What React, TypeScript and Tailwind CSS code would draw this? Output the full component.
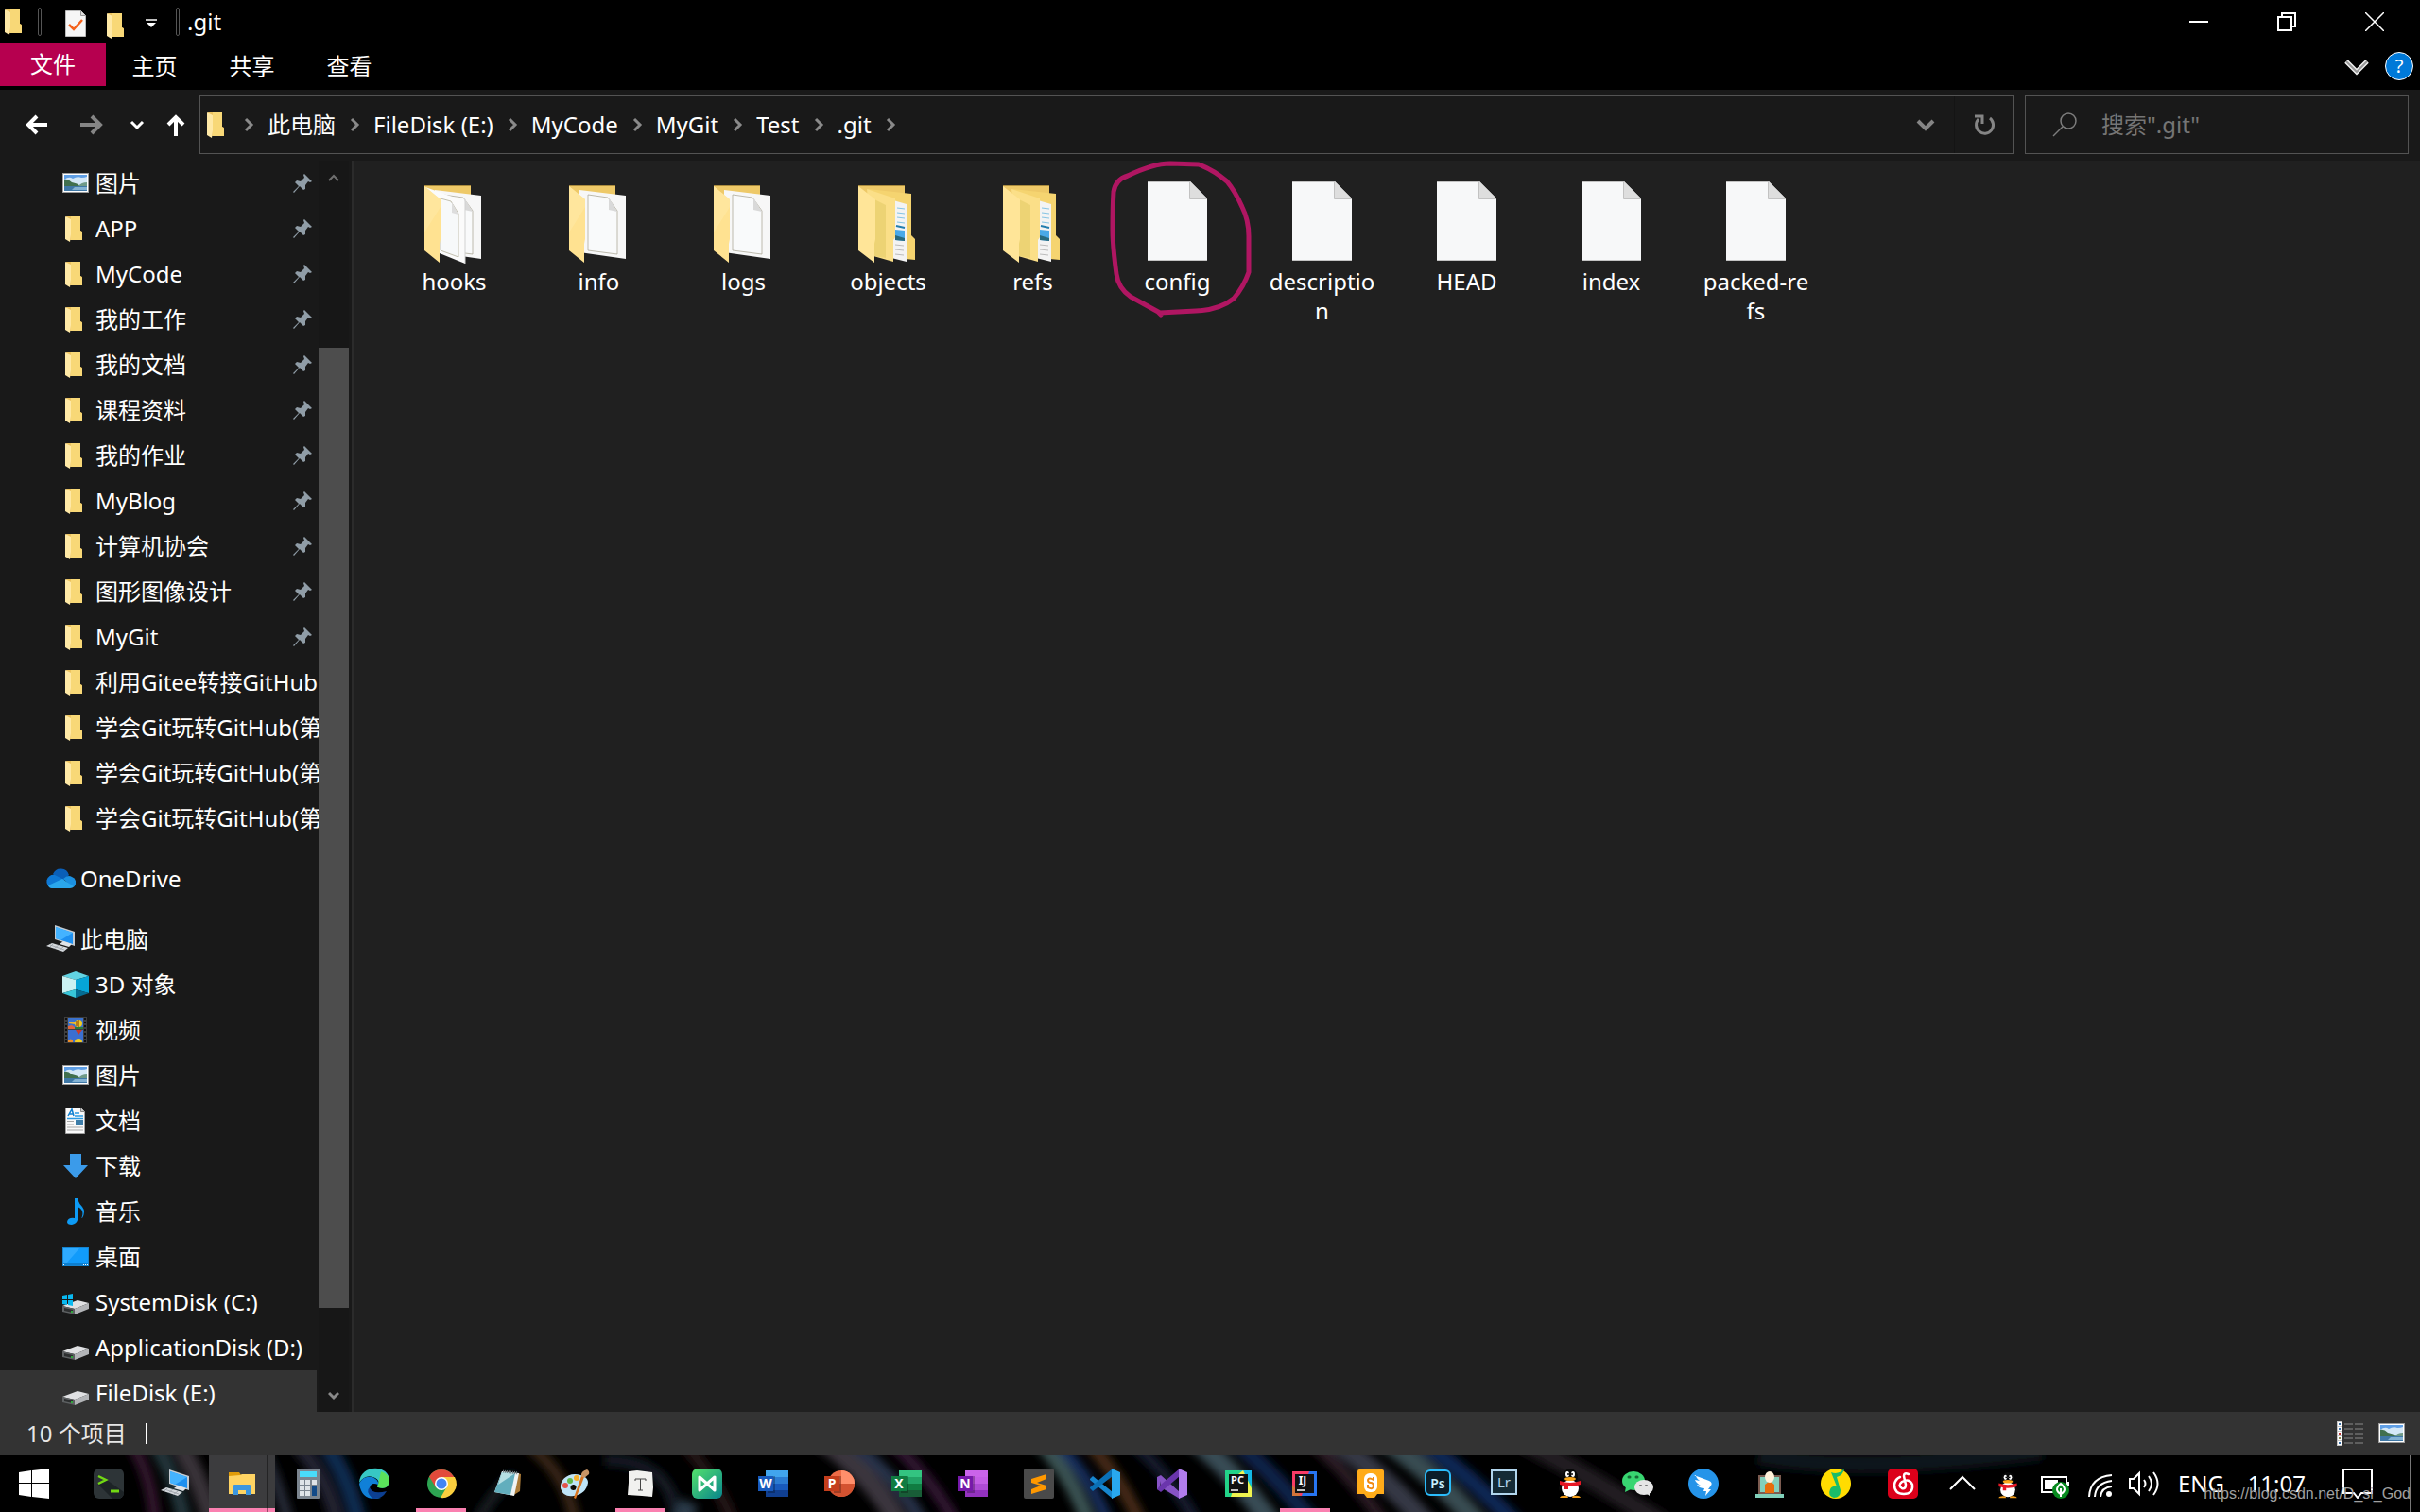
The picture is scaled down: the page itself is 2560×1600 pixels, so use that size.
import React from "react";

type IconProps = { className?: string };

/* ---------- small explorer icons ---------- */

function FolderIcon({ className = "w-7 h-7" }: IconProps) {
  return (
    <svg className={className} viewBox="0 0 28 28">
      <path d="M4 1h15v15l2 1v9H8z" fill="#edc35f" />
      <path d="M9 1h10v15l2 2v8H9z" fill="#f8d877" />
      <path d="M3 1l6 3v16l-1 8-5-3z" fill="#ffe9a6" />
    </svg>
  );
}

function PictureIcon({ className = "w-7 h-7" }: IconProps) {
  return (
    <svg className={className} viewBox="0 0 28 28">
      <rect x="0.5" y="3.5" width="27" height="20" fill="#fff" stroke="#9b9b9b" />
      <rect x="2" y="5" width="24" height="9" fill="#5f9fe6" />
      <path d="M2 10q5-4 9-1q5-3 9-1q4 0 6-1v9H2z" fill="#d4e8f7" />
      <path d="M2 10q4-1 8 3q6 1 9 4l-6 1H2z" fill="#41704f" />
      <path d="M26 13q-6 0-9 4h9z" fill="#6f9a88" />
      <rect x="2" y="17" width="24" height="5" fill="#3f78a6" />
      <path d="M13 18h13v3H10z" fill="#83b2d3" />
    </svg>
  );
}

function CheckDocIcon() {
  return (
    <svg className="w-7 h-7" viewBox="0 0 28 28">
      <path d="M3.500.5h16l5 5v22h-21z" fill="#f6f6f6" stroke="#b9b9b9" />
      <path d="M19.500.5v5h5" fill="#ddd" stroke="#999" />
      <path d="M7 15l5 5 9-10" fill="none" stroke="#f4611a" strokeWidth="2.500" />
    </svg>
  );
}

function OneDriveIcon() {
  return (
    <svg className="w-8 h-8" viewBox="0 0 32 32">
      <path d="M8 11a9 9 0 0 1 17 1l-7 8z" fill="#0a5fb8" />
      <path d="M7 26a7 7 0 1 1 3-14l10 5-12 9z" fill="#0e78d4" />
      <path d="M19 16q5-5 9-2a6 6 0 0 1 1 11z" fill="#1b90e0" />
      <path d="M3 23l15-7 12 8q-1 2-4 2H7q-3 0-4-3z" fill="#2aa7ec" />
    </svg>
  );
}

function ComputerIcon({ className = "w-8 h-8" }: IconProps) {
  return (
    <svg className={className} viewBox="0 0 32 32">
      <path d="M10 1l21 7v15l-21-7z" fill="#c3cbd2" />
      <path d="M11 3l18 6v12l-18-6z" fill="#1e90f0" />
      <path d="M11 3l18 6-13 8-5-2z" fill="#44b3ff" />
      <path d="M19 18l9 3-3 3-10-3z" fill="#dfe3e7" />
      <path d="M7 20l17 5-5 4L1 23z" fill="#d4d8dc" />
      <path d="M5 22l15 5M9 20l-4 4M14 22l-5 4M19 24l-5 4" stroke="#8f979e" strokeWidth="0.700" />
    </svg>
  );
}

function CubeIcon() {
  return (
    <svg className="w-7 h-7" viewBox="0 0 28 28">
      <path d="M14 0l14 5-14 4L0 5z" fill="#62d3e2" />
      <path d="M0 5l14 4v10L0 23z" fill="#caf1f2" />
      <path d="M28 5L14 9v10l14 4z" fill="#06a5d8" />
      <path d="M0 23l14-4v9z" fill="#38c6d9" />
      <path d="M28 23l-14-4v9z" fill="#056c92" />
    </svg>
  );
}

function VideoIcon() {
  return (
    <svg className="w-7 h-7" viewBox="0 0 28 28">
      <rect x="2" width="24" height="28" fill="#3f3f3f" />
      <rect x="6" y="1" width="16" height="12" fill="#3b72cd" />
      <rect x="6" y="14" width="16" height="13" fill="#3b6fd0" />
      <path d="M6 10l4-1 3 2v2H6z" fill="#e0673d" />
      <path d="M13 11h9v2h-9z" fill="#2b7a3b" />
      <circle cx="17" cy="7" r="4" fill="#f1cc22" />
      <path d="M17 3v8M15 4v6" stroke="#7a2f10" />
      <path d="M7 5l3 1 3-1v3l-6-1z" fill="#f0b52b" />
      <path d="M14 14h7l-4 5z" fill="#c93a28" />
      <path d="M13 27a4 4 0 0 1 8 0z" fill="#f1cc22" />
      <path d="M6 25q3-3 5 0v2H6z" fill="#ef8d2a" />
      <path d="M4 1v26M24 1v26" stroke="#101010" strokeWidth="2" strokeDasharray="2 2" />
    </svg>
  );
}

function DocumentIcon() {
  return (
    <svg className="w-7 h-7" viewBox="0 0 28 28">
      <path d="M3.500.5h16l4 4v23h-20z" fill="#fafafa" stroke="#a0a0a0" />
      <path d="M19.500.5v4h4" fill="#ccc" stroke="#888" />
      <path d="M6 9l4-7 2 7M7 7h4" fill="none" stroke="#1181d1" strokeWidth="1.500" />
      <path d="M13 6h5M13 9h9M5 11.500h17" stroke="#2b9ae2" strokeWidth="1.300" />
      <rect x="14" y="13" width="8" height="6" fill="#3c7ca8" />
      <path d="M5 14.500h7M5 18h7M5 21h17M5 24h17" stroke="#a5a5a5" strokeWidth="1.200" />
    </svg>
  );
}

function DownloadIcon() {
  return (
    <svg className="w-7 h-7" viewBox="0 0 28 28">
      <path d="M8 1h12v12h7L14 27 1 13h7z" fill="#3b9bea" />
    </svg>
  );
}

function MusicIcon() {
  return (
    <svg className="w-7 h-7" viewBox="0 0 28 28">
      <path d="M13 0h3q1 5 5 9 4 5 0 12-1 0 0-2 2-7-5-10v14q-1 4-6 5-5 0-5-3 1-5 8-4z" fill="#0d9bf5" />
    </svg>
  );
}

function DesktopIcon() {
  return (
    <svg className="w-7 h-7" viewBox="0 0 28 28">
      <rect x="0.500" y="4.500" width="27" height="19" fill="#119bfb" stroke="#1583cf" />
      <path d="M1 5h17L4 21H1z" fill="#2eaaff" />
      <path d="M1 22h26" stroke="#0a62a4" />
      <path d="M1 22.500h1M22 22.500h1M24 22.500h1M26 22.500h1" stroke="#fff" />
    </svg>
  );
}

function DiskIcon({ windows = false }: { windows?: boolean }) {
  return (
    <svg className="w-7 h-7" viewBox="0 0 28 28">
      <path d="M0 18l16-6 12 3-15 6z" fill="#e0e1e3" />
      <path d="M0 18l13 3v6L0 24z" fill="#5d6062" />
      <path d="M13 21l15-6v6l-15 6z" fill="#b2b4b7" />
      <path d="M2 20l9 2v3l-9-2z" fill="#2c2e2f" />
      <circle cx="10" cy="24" r="1" fill="#31cf3f" />
      {windows && <path d="M0 7l5-1v5H0zM6 6l5-1v6H6zM0 12h5v5l-5-1zM6 12h5v6l-5-1z" fill="#09b9f1" />}
    </svg>
  );
}

function PinIcon() {
  return (
    <svg className="w-5 h-5" viewBox="0 0 20 20">
      <path d="M12 0l8 8-2 1-2-1-3 4v4l-2 1-4-4-6 7-1-1 6-6-4-4 2-2 4 1 4-4-1-3z" fill="#909da7" />
    </svg>
  );
}

function Chevron({ className = "w-3 h-4" }: IconProps) {
  return (
    <svg className={className} viewBox="0 0 12 16" fill="none">
      <path d="M3 2l6 6-6 6" stroke="#8a8a8a" strokeWidth="3" />
    </svg>
  );
}

/* ---------- large file icons ---------- */

function EmptyFile() {
  return (
    <svg className="w-24 h-24" viewBox="1 0 96 96">
      <path d="M17 6h45l18 18v66H17z" fill="#f7f8f9" />
      <path d="M62 6l18 18H62z" fill="#dedede" />
      <path d="M61.500 6v18.500H80M17 89.500h63M17 6.500h45" stroke="#c2c2c2" fill="none" />
    </svg>
  );
}

function PaperFolder({ pages = 1 }: { pages?: number }) {
  return (
    <svg className="w-24 h-24" viewBox="1 0 96 96">
      <path d="M17 10h49v60H17z" fill="#eec968" />
      <path d="M17 10.500h49" stroke="#a98a3d" />
      <path d="M28 15l49 6v67l-49-7z" fill="#f7f7f7" />
      <path d="M37 20l21 3 10 14v46l-31-4z" fill="#f9fafb" stroke="#a39f8c" strokeWidth="0.700" />
      <path d="M59 23v13l9 2z" fill="#d9d9d9" />
      {pages > 1 && (
        <>
          <path d="M18 12l42 15v66l-32-13z" fill="#fbfbfb" />
          <path d="M60 27v66" stroke="#d1d1d1" />
          <path d="M34 24l11 3 8 13v46l-19-7z" fill="#f7f9fa" stroke="#aaa68f" strokeWidth="0.700" />
          <path d="M46 28v11l7 2z" fill="#ddd" />
        </>
      )}
      <path d="M17 11l17 14v42l-1 5v20L17 79z" fill="#ffe291" />
      <path d="M17 11l17 14v8L17 60z" fill="#ffe8a3" opacity="0.700" />
    </svg>
  );
}

function NestedFolder() {
  return (
    <svg className="w-24 h-24" viewBox="1 0 96 96">
      <path d="M17 10h49v60H17z" fill="#eec968" />
      <path d="M17 10.500h49" stroke="#a98a3d" />
      <path d="M27 14l46 5v44l4 4v22l-42-4z" fill="#f5d470" />
      <path d="M54 26l14 4v61l-16-4z" fill="#f3f3f3" />
      <path d="M58 34l8 1M58 39l8 1M58 44l8 1M58 49l8 1" stroke="#83c3e4" />
      <path d="M57 53l9 2" stroke="#237dae" strokeWidth="2" />
      <path d="M56 57l10 1v11l-10-1z" fill="#49a9e8" />
      <path d="M56 63l10 3v3l-10-1z" fill="#286a7e" />
      <path d="M56 73l9 1M56 78l9 1M56 83l9 1" stroke="#bbb" />
      <path d="M26 14l30 10v41l-2 3v23l-21-6z" fill="#fbdf88" />
      <path d="M34 25l12 6v56l-12-2z" fill="#ead06f" opacity="0.800" />
      <path d="M17 11l18 14v42l-1 5v20L17 79z" fill="#ffe598" />
    </svg>
  );
}

/* ---------- taskbar icons ---------- */

function Icon32({ children }: { children: React.ReactNode }) {
  return (
    <svg className="w-8 h-8 overflow-visible" viewBox="0 0 32 32">
      {children}
    </svg>
  );
}

function Office({ letter, dark, tones, round = false }: { letter: string; dark: string; tones: string[]; round?: boolean }) {
  return (
    <Icon32>
      {round ? (
        <>
          <circle cx="18" cy="16" r="14" fill={tones[0]} />
          <path d="M18 2a14 14 0 0 1 14 14H18z" fill={tones[1]} />
          <path d="M4 16h28a14 14 0 0 1-28 0z" fill={tones[2]} />
        </>
      ) : (
        tones.map((tone, i) => <rect key={tone} x="8" y={2 + i * 7} width="24" height="7" fill={tone} />)
      )}
      <path d="M10 8h8v18h-8z" fill="#000" opacity="0.250" />
      <rect y="8" width="16" height="16" fill={dark} />
      <text x="8" y="21" textAnchor="middle" fontSize="14" fontWeight="700" fill="#fff">
        {letter}
      </text>
    </Icon32>
  );
}

function Penguin() {
  return (
    <Icon32>
      <ellipse cx="16" cy="9" rx="8" ry="9" fill="#090909" />
      <path d="M8 14q-6 7-3 10l4-3z" fill="#090909" />
      <path d="M24 14q6 7 3 10l-4-3z" fill="#090909" />
      <ellipse cx="16" cy="21" rx="9" ry="9" fill="#fff" />
      <ellipse cx="13" cy="6" rx="2" ry="3" fill="#fff" />
      <ellipse cx="19" cy="6" rx="2" ry="3" fill="#fff" />
      <circle cx="14" cy="6" r="1" />
      <circle cx="18" cy="6" r="1" />
      <ellipse cx="16" cy="11" rx="6" ry="2" fill="#faa61a" />
      <path d="M5 13q11 4 22 0v4q-11 4-22 0z" fill="#e71824" />
      <path d="M10 16h4v6h-4z" fill="#e71824" />
      <path d="M5 31q1-3 8-2l1 2zM27 31q-1-3-8-2l-1 2z" fill="#f6a01c" />
    </Icon32>
  );
}

const apps: { name: string; active?: boolean; icon: React.ReactNode }[] = [
  {
    name: "Terminal",
    icon: (
      <Icon32>
        <rect width="32" height="32" rx="6" fill="#2d3437" />
        <path d="M14 12L5 17l15 15h8l4-4v-3z" fill="#1d2326" />
        <path d="M5 8l8 4-8 4" fill="none" stroke="#72d813" strokeWidth="2.500" />
        <path d="M18 24h9" stroke="#72d813" strokeWidth="3" />
      </Icon32>
    ),
  },
  { name: "Computer", icon: <ComputerIcon /> },
  {
    name: "File Explorer",
    icon: (
      <Icon32>
        <path d="M2 4h11l2 3-2 3H2z" fill="#e19c09" />
        <path d="M2 8l12-1 2-1h14v21H2z" fill="#ffd463" />
        <path d="M7 18q0-1 1-1h16q1 0 1 1v10h-5v-5h-8v5H7z" fill="#3c96df" />
      </Icon32>
    ),
  },
  {
    name: "Calculator",
    icon: (
      <Icon32>
        <rect x="4" width="24" height="32" rx="1" fill="#7b858f" />
        <rect x="7" y="3" width="18" height="6" fill="#49dcfa" />
        <path d="M7 12h5v5H7zM13 12h5v5h-5zM20 12h5v5h-5zM7 18h5v5H7zM13 18h5v5h-5zM7 24h5v5H7zM13 24h5v5h-5z" fill="#dfe4e8" />
        <rect x="20" y="18" width="5" height="11" fill="#124a88" />
      </Icon32>
    ),
  },
  {
    name: "Edge",
    icon: (
      <Icon32>
        <path d="M0 15C1-5 32-5 32 13q-1 10-12 7-2-1 0-3 2-4-3-7Q7 5 0 15z" fill="#37c8c4" />
        <path d="M23 3q9 3 9 10-1 10-12 7-2-1 0-3z" fill="#5be35b" />
        <path d="M0 16Q4 7 14 9q7 3 6 8-8-3-9 4 2 9 12 10Q3 36 0 16z" fill="#1080d8" />
        <path d="M11 20q3 8 18 4-5 9-15 8-8-8-3-12z" fill="#0c3f91" />
      </Icon32>
    ),
  },
  {
    name: "Chrome",
    active: true,
    icon: (
      <Icon32>
        <circle cx="16" cy="16" r="15" fill="#2da452" />
        <path d="M3 8.500A15 15 0 0 1 29 8.500L30 10H16l-6 10z" fill="#e24a3b" />
        <path d="M16 9h14a15 15 0 0 1-15 22l7-12z" fill="#fbcf3e" />
        <circle cx="16" cy="16" r="7" fill="#fff" />
        <circle cx="16" cy="16" r="5.500" fill="#4285f4" />
      </Icon32>
    ),
  },
  {
    name: "Notepad",
    icon: (
      <Icon32>
        <path d="M27 5l3 1-1 18-8 5z" fill="#aa7a37" />
        <path d="M10 3l18 2-5 24-21-4z" fill="#f0f4f4" />
        <path d="M10 4l14 1-5 23-17-3z" fill="#62aebd" />
        <path d="M10 4l14 1-18 12z" fill="#b6dfe3" />
        <path d="M11 3l16 2" stroke="#69767a" strokeWidth="3" strokeDasharray="1 1" />
      </Icon32>
    ),
  },
  {
    name: "Paint",
    icon: (
      <Icon32>
        <path d="M17 6C8 6 1 13 2 21q3 10 14 8 13-2 15-14 0-8-14-9zm-1 11a3 3 0 1 1-1 6 3 3 0 0 1 1-6z" fill="#bfe4f7" fillRule="evenodd" />
        <circle cx="7" cy="18" r="3" fill="#e45248" />
        <circle cx="12" cy="13" r="3" fill="#62b74b" />
        <circle cx="19" cy="10" r="3" fill="#f6b12d" />
        <path d="M24 8l3 1-9 23-2-1z" fill="#d97622" />
        <path d="M24 8q-1-5 6-7 3 2 2 5l-5 4z" fill="#c99566" />
      </Icon32>
    ),
  },
  {
    name: "Typora",
    active: true,
    icon: (
      <Icon32>
        <path d="M4 3l9-1 16 2 1 16-1 10-11-1L3 28l1-13z" fill="#f1f1ef" />
        <path d="M11 13v-2h11v2M16.500 11v12M14 23h5" fill="none" stroke="#444" />
      </Icon32>
    ),
  },
  {
    name: "MindMaster",
    icon: (
      <Icon32>
        <defs>
          <linearGradient id="mind" x1="0" y1="0" x2="1" y2="1">
            <stop stopColor="#55e36c" />
            <stop offset="1" stopColor="#07848c" />
          </linearGradient>
        </defs>
        <rect width="32" height="32" rx="6" fill="url(#mind)" />
        <path d="M8 9v14l16-14v14z" fill="none" stroke="#fff" strokeWidth="3" strokeLinejoin="round" />
      </Icon32>
    ),
  },
  { name: "Word", icon: <Office letter="W" dark="#185abd" tones={["#41a5ee", "#2b7cd3", "#185abd", "#103f91"]} /> },
  { name: "PowerPoint", icon: <Office letter="P" dark="#c43e1c" tones={["#ed6c47", "#ff8f6b", "#d35230"]} round /> },
  { name: "Excel", icon: <Office letter="X" dark="#107c41" tones={["#33c481", "#21a366", "#107c41", "#185c37"]} /> },
  { name: "OneNote", icon: <Office letter="N" dark="#7719aa" tones={["#ca64ea", "#c45ee6", "#ae4bd5", "#9332bf"]} /> },
  {
    name: "Sublime Text",
    icon: (
      <Icon32>
        <rect width="32" height="32" rx="2" fill="#4a4a4a" />
        <path d="M8 11l16-5v5l-10 4 10 3v4L8 27v-5l10-4-10-3z" fill="#ff9800" />
      </Icon32>
    ),
  },
  {
    name: "VS Code",
    icon: (
      <Icon32>
        <path d="M0 11l3-3 21 17v7L0 12z" fill="#1686cf" />
        <path d="M0 21l3 3L24 8V0L0 20z" fill="#0a70b6" />
        <path d="M23 0l9 4v24l-9 4z" fill="#29a8ef" />
      </Icon32>
    ),
  },
  {
    name: "Visual Studio",
    icon: (
      <Icon32>
        <path d="M0 9l4-2 20 18v7L4 20v-7L3 21v2l-3-1z" fill="#8753c5" />
        <path d="M0 22l4 3L24 8V0L4 17z" fill="#6a35ac" />
        <path d="M23 0l9 4v24l-9 4z" fill="#b17ced" />
      </Icon32>
    ),
  },
  {
    name: "PyCharm",
    icon: (
      <Icon32>
        <path d="M2 2h28v28H2z" fill="#22d389" />
        <path d="M18 2h12v16z" fill="#13b9e5" />
        <path d="M16 6l5-4 9 19v9H8z" fill="#eff34f" />
        <path d="M6 6h20v20H6z" fill="#111" />
        <text x="15" y="16" textAnchor="middle" fontSize="11" fontWeight="700" fill="#fff">
          PC
        </text>
        <path d="M8 23h8" stroke="#fff" strokeWidth="1.500" />
      </Icon32>
    ),
  },
  {
    name: "IntelliJ IDEA",
    active: true,
    icon: (
      <Icon32>
        <path d="M3 3h26v26H3z" fill="#f83b66" />
        <path d="M29 3v26H13L21 3z" fill="#2775f2" />
        <path d="M3 17l9 12H3z" fill="#d2743a" />
        <path d="M6 6h20v20H6z" fill="#111" />
        <text x="14" y="17" textAnchor="middle" fontSize="12" fontWeight="700" fill="#fff">
          IJ
        </text>
        <path d="M8 23h8" stroke="#fff" strokeWidth="1.500" />
      </Icon32>
    ),
  },
  {
    name: "Scratch",
    icon: (
      <Icon32>
        <path d="M4 1h24q2 0 2 2v24h-7l-3 4h-8l-3-4H2V3q0-2 2-2z" fill="#ffab19" />
        <rect x="9" y="5" width="14" height="20" rx="6" fill="#fff" />
        <path d="M19 9v3q-5-3-6 0 0 3 3 3t3 4q-1 4-6 1v-3" fill="none" stroke="#f18b12" strokeWidth="2" />
      </Icon32>
    ),
  },
  {
    name: "Photoshop",
    icon: (
      <Icon32>
        <rect x="3" y="2" width="26" height="26" rx="5" fill="#0b1d29" stroke="#2bbcfb" strokeWidth="2" />
        <text x="16" y="21" textAnchor="middle" fontSize="14" fontWeight="600" fill="#c9f0ff">
          Ps
        </text>
      </Icon32>
    ),
  },
  {
    name: "Lightroom",
    icon: (
      <Icon32>
        <rect x="3" y="2" width="26" height="25" fill="#152b36" stroke="#b1d5ed" strokeWidth="2" />
        <text x="16" y="20" textAnchor="middle" fontSize="15" fill="#b1d5ed">
          Lr
        </text>
      </Icon32>
    ),
  },
  { name: "QQ", icon: <Penguin /> },
  {
    name: "WeChat",
    icon: (
      <Icon32>
        <ellipse cx="12" cy="13" rx="12" ry="10" fill="#38d671" />
        <path d="M4 19l-1 6 6-3z" fill="#38d671" />
        <ellipse cx="23" cy="20" rx="10" ry="8" fill="#e6e6e6" />
        <path d="M25 26l4 3v-6z" fill="#e6e6e6" />
        <path d="M7 9h1M15 9h1" stroke="#166b36" strokeWidth="3" strokeLinecap="round" />
        <path d="M19 18h1M25 18h1" stroke="#777" strokeWidth="2" strokeLinecap="round" />
      </Icon32>
    ),
  },
  {
    name: "DingTalk",
    icon: (
      <Icon32>
        <circle cx="16" cy="16" r="16" fill="#2594e9" />
        <path d="M6 7l16 6q4 2 2 5l-3 4h3l-6 7 1-5h-3l1-3q-6 0-8-4l4 1q-5-3-6-6l5 1q-4-3-4-6z" fill="#fff" />
      </Icon32>
    ),
  },
  {
    name: "Remote",
    icon: (
      <Icon32>
        <path d="M4 7h24v20H4z" fill="#7b5b50" />
        <path d="M6 9h20v16H6z" fill="#83d0bc" />
        <path d="M11 26v-9l5-4 5 4v9z" fill="#e76d0c" />
        <ellipse cx="16" cy="9" rx="5" ry="6" fill="#fff1da" />
        <path d="M1 27h30v4H1z" fill="#80d0ba" />
      </Icon32>
    ),
  },
  {
    name: "QQ Music",
    icon: (
      <Icon32>
        <circle cx="16" cy="16" r="16" fill="#ffdc00" />
        <path d="M11 4q8 3 14-4-1 7-8 9l4 14q0 8-7 8-7-2-4-9 2-4 7-3z" fill="#19bc69" />
      </Icon32>
    ),
  },
  {
    name: "NetEase Music",
    icon: (
      <Icon32>
        <rect width="32" height="32" rx="5" fill="#dc001a" />
        <path d="M22 6q-5-2-5 2l2 9q0 5-4 4-5-3 0-7 8-4 11 3 1 10-9 10-10 0-10-10 1-6 6-8" fill="none" stroke="#fff" strokeWidth="2.500" strokeLinecap="round" />
      </Icon32>
    ),
  },
];

/* ---------- data ---------- */

const quickAccess = [
  "APP",
  "MyCode",
  "我的工作",
  "我的文档",
  "课程资料",
  "我的作业",
  "MyBlog",
  "计算机协会",
  "图形图像设计",
  "MyGit",
];

const recent = ["利用Gitee转接GitHub", "学会Git玩转GitHub(第一", "学会Git玩转GitHub(第二", "学会Git玩转GitHub(第三"];

const devices = [
  { name: "3D 对象", icon: <CubeIcon /> },
  { name: "视频", icon: <VideoIcon /> },
  { name: "图片", icon: <PictureIcon /> },
  { name: "文档", icon: <DocumentIcon /> },
  { name: "下载", icon: <DownloadIcon /> },
  { name: "音乐", icon: <MusicIcon /> },
  { name: "桌面", icon: <DesktopIcon /> },
  { name: "SystemDisk (C:)", icon: <DiskIcon windows /> },
  { name: "ApplicationDisk (D:)", icon: <DiskIcon /> },
  { name: "FileDisk (E:)", icon: <DiskIcon />, selected: true },
];

const crumbs = ["此电脑", "FileDisk (E:)", "MyCode", "MyGit", "Test", ".git"];

const files = [
  { name: "hooks", icon: <PaperFolder pages={2} /> },
  { name: "info", icon: <PaperFolder /> },
  { name: "logs", icon: <PaperFolder /> },
  { name: "objects", icon: <NestedFolder /> },
  { name: "refs", icon: <NestedFolder /> },
  { name: "config", icon: <EmptyFile />, circled: true },
  { name: "description", icon: <EmptyFile /> },
  { name: "HEAD", icon: <EmptyFile /> },
  { name: "index", icon: <EmptyFile /> },
  { name: "packed-refs", icon: <EmptyFile /> },
];

/* ---------- window parts ---------- */

function TitleBar() {
  return (
    <header className="flex h-[45px] shrink-0 items-center bg-black">
      <div className="flex items-center pl-[2px]">
        <FolderIcon />
        <span className="ml-[10px] h-[30px] w-1 rounded-sm border border-[#555]" />
        <button aria-label="属性" className="ml-[22px] mt-1">
          <CheckDocIcon />
        </button>
        <button aria-label="新建文件夹" className="ml-4 mt-2">
          <FolderIcon />
        </button>
        <button aria-label="自定义快速访问工具栏" className="ml-4 mt-1">
          <svg className="h-3 w-3" viewBox="0 0 12 12">
            <path d="M0 2h12" stroke="#fff" strokeWidth="1.500" />
            <path d="M1 5h10l-5 5z" fill="#fff" />
          </svg>
        </button>
        <span className="ml-5 h-[30px] w-1 rounded-sm border border-[#555]" />
      </div>
      <h1 className="ml-2 flex-1 text-2xl">.git</h1>
      <button aria-label="最小化" className="flex w-[93px] justify-center">
        <svg className="h-5 w-5" viewBox="0 0 20 20">
          <path d="M0 10h20" stroke="#fff" strokeWidth="2" />
        </svg>
      </button>
      <button aria-label="还原" className="flex w-[93px] justify-center">
        <svg className="h-5 w-5" viewBox="0 0 20 20" fill="none" stroke="#fff" strokeWidth="2">
          <path d="M1 5h14v14H1zM5 5V1h14v14h-4" />
        </svg>
      </button>
      <button aria-label="关闭" className="mr-[2px] flex w-[93px] justify-center">
        <svg className="h-5 w-5" viewBox="0 0 20 20">
          <path d="M0 0l20 20M20 0L0 20" stroke="#fff" strokeWidth="1.500" />
        </svg>
      </button>
    </header>
  );
}

function Ribbon() {
  return (
    <div className="flex h-[50px] shrink-0 bg-black text-2xl">
      <button className="h-[46px] w-28 bg-[#b6004f]">文件</button>
      <button className="w-[103px]">主页</button>
      <button className="w-[103px]">共享</button>
      <button className="w-[103px]">查看</button>
      <div className="ml-auto flex items-center gap-4 pr-[7px]">
        <button aria-label="展开功能区">
          <svg className="h-7 w-7" viewBox="0 0 28 28" fill="none">
            <path d="M3 9l11 11L25 9" stroke="#f0f0f0" strokeWidth="5" />
            <path d="M3 9l11 11L25 9" stroke="#999" strokeWidth="2" />
          </svg>
        </button>
        <button aria-label="帮助" className="h-[30px] w-[30px] rounded-full border border-white bg-[#0079d8] text-xl leading-7">
          ?
        </button>
      </div>
    </div>
  );
}

function AddressRow() {
  return (
    <div className="flex h-[75px] shrink-0 bg-[#191919] pr-3 pt-[6px] text-2xl">
      <nav className="flex h-[62px] w-[211px] shrink-0 items-center pl-[27px]">
        <button aria-label="后退">
          <svg className="h-6 w-6" viewBox="0 0 24 24" fill="none" stroke="#fff" strokeWidth="4">
            <path d="M23 12H3M12 3l-9 9 9 9" />
          </svg>
        </button>
        <button aria-label="前进" className="ml-[34px]">
          <svg className="h-6 w-6" viewBox="0 0 24 24" fill="none" stroke="#858585" strokeWidth="4">
            <path d="M0 12h20M12 3l9 9-9 9" />
          </svg>
        </button>
        <button aria-label="最近" className="ml-7">
          <svg className="h-4 w-4" viewBox="0 0 16 16" fill="none" stroke="#fff" strokeWidth="3">
            <path d="M2 5l6 6 6-6" />
          </svg>
        </button>
        <button aria-label="上移" className="ml-[21px]">
          <svg className="h-6 w-6" viewBox="0 0 24 24" fill="none" stroke="#fff" strokeWidth="4">
            <path d="M12 24V4M4 12l8-8 8 8" />
          </svg>
        </button>
      </nav>
      <div className="flex h-[62px] flex-1 items-center border border-[#535353] pl-1">
        <FolderIcon />
        <ol className="flex items-center">
          <li className="ml-[13px] flex">
            <Chevron />
          </li>
          {crumbs.map((crumb) => (
            <li key={crumb} className="ml-[14px] flex items-center gap-[14px]">
              <a href="#">{crumb}</a>
              <Chevron />
            </li>
          ))}
        </ol>
        <button aria-label="历史" className="ml-auto mr-5">
          <svg className="h-5 w-5" viewBox="0 0 20 20" fill="none" stroke="#858585" strokeWidth="4">
            <path d="M2 6l8 8 8-8" />
          </svg>
        </button>
        <button aria-label="刷新" className="flex h-full w-[62px] items-center justify-center border-l border-[#141414]">
          <svg className="h-6 w-6" viewBox="0 0 24 24" fill="none" stroke="#858585" strokeWidth="3">
            <path d="M18 5a9 9 0 1 1-12 1M2 3h8v8" />
          </svg>
        </button>
      </div>
      <label className="ml-3 flex h-[62px] w-[406px] items-center border border-[#535353] pl-7">
        <svg className="h-7 w-7" viewBox="0 0 28 28" fill="none" stroke="#7d7d7d" strokeWidth="1.500">
          <circle cx="17" cy="10" r="8" />
          <path d="M11 16L1 26" />
        </svg>
        <input
          type="text"
          aria-label="搜索"
          placeholder='搜索".git"'
          className="ml-6 w-[300px] bg-transparent outline-none placeholder:text-[#757575]"
        />
      </label>
    </div>
  );
}

function SideRow({ name, icon, pinned, selected }: { name: string; icon: React.ReactNode; pinned?: boolean; selected?: boolean }) {
  return (
    <li className={selected ? "mr-[2px] bg-[#333]" : ""}>
      <a href="#" className="flex h-12 items-center pl-[66px]">
        <span className="w-7 shrink-0">{icon}</span>
        <span className="ml-[7px] flex-1 overflow-hidden whitespace-nowrap">{name}</span>
        {pinned && (
          <span className="mr-[7px] shrink-0">
            <PinIcon />
          </span>
        )}
      </a>
    </li>
  );
}

function Sidebar() {
  return (
    <aside className="flex w-[375px] shrink-0 border-r-[3px] border-[#2b2b2b] bg-[#191919]">
      <nav className="w-[337px] overflow-hidden">
        <ul>
          <SideRow name="图片" icon={<PictureIcon />} pinned />
          {quickAccess.map((name) => (
            <SideRow key={name} name={name} icon={<FolderIcon />} pinned />
          ))}
          {recent.map((name) => (
            <SideRow key={name} name={name} icon={<FolderIcon />} />
          ))}
        </ul>
        <a href="#" className="my-4 flex h-12 items-center gap-[5px] pl-12">
          <OneDriveIcon />
          OneDrive
        </a>
        <a href="#" className="flex h-12 items-center gap-[5px] pl-12">
          <ComputerIcon />
          此电脑
        </a>
        <ul>
          {devices.map((device) => (
            <SideRow key={device.name} {...device} />
          ))}
        </ul>
      </nav>
      <div className="flex w-8 flex-col items-center bg-[#171717] py-2">
        <svg className="h-5 w-3" viewBox="0 0 12 20" fill="none" stroke="#6f6f6f" strokeWidth="2">
          <path d="M1 13l5-5 5 5" />
        </svg>
        <div className="mb-[82px] mt-[170px] w-full flex-1 bg-[#4d4d4d]" />
        <svg className="h-5 w-3" viewBox="0 0 12 20" fill="none" stroke="#8a8a8a" strokeWidth="3">
          <path d="M1 8l5 5 5-5" />
        </svg>
      </div>
    </aside>
  );
}

function FileGrid() {
  return (
    <main className="flex flex-1 flex-wrap content-start bg-[#202020] pl-[29px] pt-4">
      {files.map((file) => (
        <button key={file.name} className="relative flex w-[153px] flex-col items-center">
          {file.icon}
          <span className="w-[118px] break-all leading-[31px]">{file.name}</span>
          {file.circled && (
            <svg className="absolute -top-4 left-0 h-[164px] w-[153px] overflow-visible" viewBox="1169 170 153 164" fill="none">
              <path
                d="M1178 203Q1180 190 1193 186Q1220 173 1238 173L1268 174Q1284 180 1298 192Q1307 203 1314 219Q1321 233 1321 250L1321 288Q1316 303 1305 316Q1290 328 1265 329L1227 331L1196 314Q1183 305 1181 290Q1177 260 1177 243Q1177 220 1178 203M1225 330l3 3"
                stroke="#b01662"
                strokeWidth="5"
                strokeLinecap="round"
                strokeLinejoin="round"
              />
            </svg>
          )}
        </button>
      ))}
    </main>
  );
}

function StatusBar() {
  return (
    <footer className="flex h-[46px] shrink-0 items-center bg-[#333] pl-7 pr-4 text-[#e6e6e6]">
      <span>10 个项目</span>
      <span className="ml-5 h-[22px] w-[2px] bg-white" />
      <div className="ml-auto flex gap-4">
        <button aria-label="详细信息">
          <svg className="h-7 w-7" viewBox="0 0 28 28">
            <path d="M0 1h6v26H0z" fill="#c6c6c6" />
            <path d="M1 2h4v4H1zM1 7h4v4H1zM1 12h4v4H1zM1 17h4v4H1zM1 22h4v4H1z" fill="#fff" />
            <path d="M2 4h2M2 9h2M2 24h2" stroke="#3a6ea5" strokeWidth="2" />
            <path d="M2 14h2" stroke="#b33" strokeWidth="2" />
            <path d="M2 19h2" stroke="#8a8a50" strokeWidth="2" />
            <path d="M8 4h20M8 9h20M8 14h20M8 19h20M8 24h20" stroke="#8b8b8b" strokeDasharray="9 2" />
          </svg>
        </button>
        <button aria-label="大图标">
          <PictureIcon />
        </button>
      </div>
    </footer>
  );
}

/* out of focus light trails of the wallpaper behind the taskbar */
function TaskbarGlow() {
  return (
    <svg className="absolute inset-0 h-full w-full" viewBox="0 0 2560 60" preserveAspectRatio="none" fill="none">
      <defs>
        <filter id="soft" x="-5%" y="-50%" width="110%" height="200%">
          <feGaussianBlur stdDeviation="5" />
        </filter>
      </defs>
      <g filter="url(#soft)" strokeWidth="12">
        <path d="M140-10q20 30 24 80" stroke="#35152f" />
        <path d="M165-10q20 30 30 80" stroke="#24353a" strokeWidth="16" />
        <path d="M190-10q20 30 34 80" stroke="#383038" strokeWidth="20" />
        <path d="M275-10q20 40 30 80" stroke="#252a38" />
        <path d="M315-10q30 30 42 80" stroke="#202433" strokeWidth="16" />
        <path d="M345-10q24 34 34 80" stroke="#10294f" strokeWidth="18" />
        <path d="M505 70q20-35 40-50" stroke="#171a20" />
        <path d="M560-10q40 30 48 80" stroke="#3a2617" />
        <path d="M640 5q70 0 75 60" stroke="#191d28" />
        <path d="M725-10q30 30 50 80" stroke="#271319" />
        <path d="M720 70l10-20" stroke="#293b49" strokeWidth="20" />
        <path d="M865-20q60 40 90 100" stroke="#3a353e" strokeWidth="22" />
        <path d="M890-20q60 40 90 100" stroke="#25334a" strokeWidth="14" />
        <path d="M935-20q50 40 80 100" stroke="#341536" />
        <path d="M1095-20q40 40 60 100" stroke="#3a5352" strokeWidth="16" />
        <path d="M1110-20q45 40 65 100" stroke="#162d5e" />
        <path d="M1145-20q40 40 65 100" stroke="#472b14" strokeWidth="14" />
        <path d="M1190-20q50 40 80 100" stroke="#131c30" />
        <path d="M1260-20q50 40 90 100" stroke="#394c54" strokeWidth="22" />
        <path d="M1300-20q50 40 95 100" stroke="#10204a" strokeWidth="18" />
        <path d="M1380-20q50 40 90 100" stroke="#2e1c26" />
        <path d="M1405-20q60 40 110 100" stroke="#353744" strokeWidth="22" />
        <path d="M1460-20q60 40 110 100" stroke="#394b51" strokeWidth="22" />
        <path d="M1495-20q60 40 115 100" stroke="#112554" strokeWidth="18" />
        <path d="M1600-20q80 40 170 100" stroke="#221d24" strokeWidth="20" />
        <path d="M1860 0q100 20 300-5" stroke="#10131b" strokeWidth="20" />
      </g>
    </svg>
  );
}

function Tray() {
  return (
    <div className="flex w-[512px] shrink-0 items-center">
      <button aria-label="显示隐藏的图标" className="ml-[14px]">
        <svg className="h-7 w-7" viewBox="0 0 28 28" fill="none" stroke="#fff" strokeWidth="2">
          <path d="M1 20L14 7l13 13" />
        </svg>
      </button>
      <button aria-label="QQ" className="ml-5">
        <svg className="mt-1 h-7 w-7" viewBox="0 0 32 32">
          <Penguin />
        </svg>
      </button>
      <button aria-label="电池" className="ml-5">
        <svg className="h-8 w-8" viewBox="0 0 32 32" fill="none">
          <path d="M2 9h26v16H2z" stroke="#fff" strokeWidth="2" />
          <path d="M5 12h14v10H5zM29 14h2v5h-2z" fill="#fff" />
          <circle cx="22" cy="23" r="9" fill="#078a1e" />
          <path d="M22 16q-8 7 0 11 8-4 0-11zM22 21v9" stroke="#fff" strokeWidth="2" />
        </svg>
      </button>
      <button aria-label="网络" className="ml-4">
        <svg className="h-8 w-8" viewBox="0 0 32 32" fill="none" stroke="#fff" strokeWidth="2">
          <path d="M4 30Q5 9 28 7M10 30q1-15 18-17M16 30q1-10 12-11" />
          <circle cx="25" cy="27" r="3" fill="#fff" stroke="none" />
        </svg>
      </button>
      <button aria-label="音量" className="ml-[14px]">
        <svg className="h-8 w-8" viewBox="0 0 32 32" fill="none" stroke="#fff" strokeWidth="2">
          <path d="M1 11h4l6-6v22l-6-6H1zM16 12q3 4 0 8M21 8q6 8 0 16M26 4q9 12 0 24" />
        </svg>
      </button>
      <button className="ml-5">ENG</button>
      <time className="ml-auto">11:07</time>
      <button aria-label="通知" className="ml-[39px]">
        <svg className="h-8 w-8" viewBox="0 0 32 32" fill="none" stroke="#fff" strokeWidth="2">
          <path d="M1 1h30v25H20l-4 5-4-5H1z" />
        </svg>
      </button>
      <span className="ml-[39px] mr-[9px] h-[60px] w-[2px] bg-[#777]" />
    </div>
  );
}

function Taskbar() {
  return (
    <div className="relative h-[60px] shrink-0 overflow-hidden bg-black">
      <TaskbarGlow />
      <div className="relative flex h-full">
        <button aria-label="开始" className="flex w-20 shrink-0 items-center pl-5">
          <svg className="h-8 w-8" viewBox="0 0 32 32" fill="#fff">
            <path d="M0 4l13-2v13H0zM14 2l18-2v15H14zM0 16h13v14L0 28zM14 16h18v16l-18-2z" />
          </svg>
        </button>
        <nav className="flex flex-1">
          {apps.map((app) => (
            <button
              key={app.name}
              aria-label={app.name}
              className={
                app.name === "File Explorer"
                  ? "relative flex flex-1 items-center justify-center bg-[#3c3c3e]"
                  : "relative flex flex-1 items-center justify-center"
              }
            >
              {app.icon}
              {app.active && <span className="absolute bottom-0 h-1 w-[53px] bg-[#fa80b0]" />}
              {app.name === "File Explorer" && (
                <>
                  <span className="absolute bottom-0 h-1 w-full bg-[#fa80b0]" />
                  <span className="absolute right-[7px] h-full w-[2px] bg-black/40" />
                </>
              )}
            </button>
          ))}
        </nav>
        <Tray />
      </div>
      <span className="absolute bottom-[7px] right-[10px] font-['Liberation_Sans',sans-serif] text-base text-[#a0a0a0]">
        https://blog.csdn.net/D_si_God
      </span>
    </div>
  );
}

export default function App() {
  return (
    <div className="flex h-screen flex-col overflow-hidden bg-[#191919] font-['Noto_Sans','Noto_Sans_CJK_SC',sans-serif] text-2xl text-white">
      <TitleBar />
      <Ribbon />
      <AddressRow />
      <div className="flex min-h-0 flex-1 text-2xl">
        <Sidebar />
        <FileGrid />
      </div>
      <StatusBar />
      <Taskbar />
    </div>
  );
}
